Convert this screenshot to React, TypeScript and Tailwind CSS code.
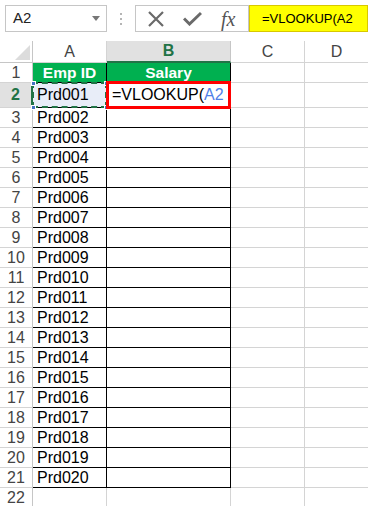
import React from "react";

const font = { fontFamily: '"Liberation Sans", Arial, sans-serif' };

function RowHeader({ n, sel, h }: { n: number; sel?: boolean; h: string }) {
  return (
    <div
      className={`w-[33px] shrink-0 flex items-center justify-center border-b border-[#d4d4d4] text-[16px] ${h} ${
        sel
          ? "bg-[#e1e1e1] border-r-2 border-r-[#217346] text-[#217346] font-bold"
          : "bg-white border-r border-r-[#c6c6c6] text-[#444]"
      }`}
    >
      {n}
    </div>
  );
}

export default function App() {
  const rows = Array.from({ length: 19 }, (_, i) => i + 3);
  const pad = (n: number) => String(n).padStart(3, "0");
  return (
    <div className="w-[368px] h-[506px] overflow-hidden bg-white" style={font}>
      {/* formula bar */}
      <div className="h-[41px] flex items-start pt-[5px]">
        <div className="ml-[5px] w-[102px] h-[27px] border border-[#c6c6c6] flex items-center justify-between pl-[7px] pr-[6px]">
          <span className="text-[15px] text-[#222]">A2</span>
          <svg width="8" height="5" viewBox="0 0 8 5">
            <path d="M0 0 L8 0 L4 5 Z" fill="#777" />
          </svg>
        </div>
        <div className="w-[28px] h-[27px] flex flex-col items-center justify-center gap-[3px]">
          <div className="w-[2px] h-[2px] bg-[#b5b5b5]" />
          <div className="w-[2px] h-[2px] bg-[#b5b5b5]" />
          <div className="w-[2px] h-[2px] bg-[#b5b5b5]" />
        </div>
        <div className="w-[114px] h-[27px] border border-[#c6c6c6] flex items-center">
          <svg className="ml-[11px]" width="18" height="18" viewBox="0 0 18 18">
            <path d="M2 2 L16 16 M16 2 L2 16" stroke="#6a6a6a" strokeWidth="2.2" />
          </svg>
          <svg className="ml-[18px]" width="19" height="15" viewBox="0 0 19 15">
            <path d="M1 7.5 L6.5 13 L18 2" stroke="#6a6a6a" strokeWidth="3" fill="none" />
          </svg>
          <span
            className="ml-[19px] text-[20px] italic text-[#555] leading-none"
            style={{ fontFamily: '"Liberation Serif", "Times New Roman", serif' }}
          >
            fx
          </span>
        </div>
        <div className="flex-1 h-[27px] bg-[#ffff00] border border-[#d8c800] flex items-center pl-[12px]">
          <span className="text-[13px] text-black">=VLOOKUP(A2</span>
        </div>
      </div>

      {/* column headers */}
      <div className="flex h-[22px]">
        <div className="w-[33px] shrink-0 bg-white border-r border-b border-[#c6c6c6] flex items-end justify-end p-[2px]">
          <svg width="15" height="15" viewBox="0 0 15 15">
            <path d="M15 0 L15 15 L0 15 Z" fill="#dcdcdc" />
          </svg>
        </div>
        <div className="w-[74px] shrink-0 border-r border-b border-[#d4d4d4] bg-white flex items-center justify-center text-[16px] text-[#444]">
          A
        </div>
        <div className="w-[124px] shrink-0 border-r border-[#c6c6c6] border-b-2 border-b-[#217346] bg-[#e1e1e1] flex items-center justify-center text-[16px] font-bold text-[#217346]">
          B
        </div>
        <div className="w-[74px] shrink-0 border-r border-b border-[#d4d4d4] bg-white flex items-center justify-center text-[16px] text-[#444]">
          C
        </div>
        <div className="flex-1 border-b border-[#d4d4d4] bg-white flex items-center justify-center text-[16px] text-[#444]">
          D
        </div>
      </div>

      {/* row 1 */}
      <div className="flex h-[20px]">
        <RowHeader n={1} h="h-[20px]" />
        <div className="w-[74px] shrink-0 bg-[#00b050] border-r border-b border-black flex items-center justify-center text-[15.5px] font-bold text-white">
          Emp ID
        </div>
        <div className="w-[124px] shrink-0 bg-[#00b050] border-r border-b border-black flex items-center justify-center text-[15.5px] font-bold text-white">
          Salary
        </div>
        <div className="w-[74px] shrink-0 border-r border-b border-[#d4d4d4]" />
        <div className="flex-1 border-b border-[#d4d4d4]" />
      </div>

      {/* row 2 */}
      <div className="flex h-[25px]">
        <RowHeader n={2} sel h="h-[25px]" />
        <div className="relative w-[74px] shrink-0 bg-[#e8edf8] border-r border-b border-black flex items-center pl-[4px] text-[16px] text-black">
          Prd001
          <div className="absolute left-[-1px] top-[-1px] right-[-1px] bottom-[-1px] border-2 border-dashed border-[#217346]" />
          <div className="absolute left-[-2px] top-[-2px] w-[5px] h-[5px] bg-[#4472c4] border border-white" />
          <div className="absolute right-[-3px] top-[-2px] w-[5px] h-[5px] bg-[#4472c4] border border-white" />
          <div className="absolute left-[-2px] bottom-[-3px] w-[5px] h-[5px] bg-[#4472c4] border border-white" />
          <div className="absolute right-[-3px] bottom-[-3px] w-[5px] h-[5px] bg-[#4472c4] border border-white" />
        </div>
        <div className="relative w-[124px] shrink-0 border-r border-b border-black flex items-center pl-[5px] text-[16px] text-black">
          <span>=VLOOKUP(</span>
          <span className="text-[#4f7fe8]">A2</span>
          <div className="absolute left-[-1px] top-[-2px] right-[-1px] bottom-[-2px] border-[3px] border-[#ff0000]" />
        </div>
        <div className="w-[74px] shrink-0 border-r border-b border-[#d4d4d4]" />
        <div className="flex-1 border-b border-[#d4d4d4]" />
      </div>

      {rows.map((r) => (
        <div key={r} className="flex h-[20px]">
          <RowHeader n={r} h="h-[20px]" />
          <div className="w-[74px] shrink-0 border-r border-b border-black flex items-center pl-[4px] text-[16px] text-black">
            Prd{pad(r - 1)}
          </div>
          <div className="w-[124px] shrink-0 border-r border-b border-black" />
          <div className="w-[74px] shrink-0 border-r border-b border-[#d4d4d4]" />
          <div className="flex-1 border-b border-[#d4d4d4]" />
        </div>
      ))}

      {/* row 22 */}
      <div className="flex h-[20px]">
        <RowHeader n={22} h="h-[20px]" />
        <div className="w-[74px] shrink-0 border-r border-b border-[#d4d4d4]" />
        <div className="w-[124px] shrink-0 border-r border-b border-[#d4d4d4]" />
        <div className="w-[74px] shrink-0 border-r border-b border-[#d4d4d4]" />
        <div className="flex-1 border-b border-[#d4d4d4]" />
      </div>
    </div>
  );
}
